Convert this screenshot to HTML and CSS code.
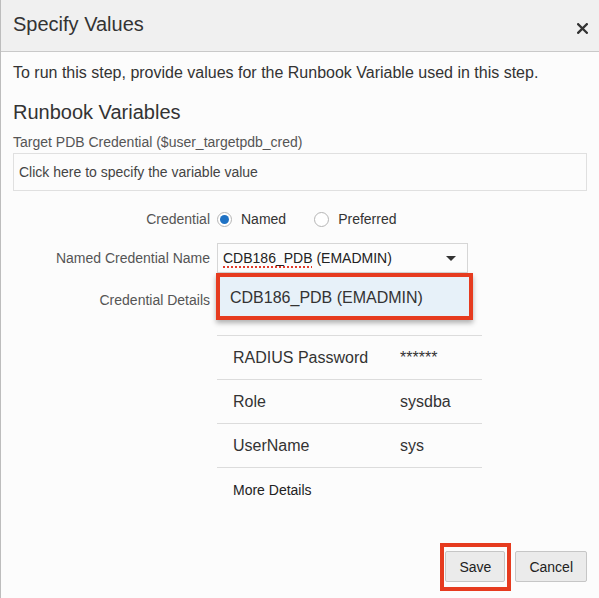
FILE: index.html
```html
<!DOCTYPE html>
<html>
<head>
<meta charset="utf-8">
<link rel="stylesheet" href="styles.css">
</head>
<body>
<div class="dialog">
  <div class="header">
    <div class="title">Specify Values</div>
    <svg class="close" width="11" height="11" viewBox="0 0 11 11"><path d="M1.2 1.2 L9.8 9.8 M9.8 1.2 L1.2 9.8" stroke="#333" stroke-width="2.3" stroke-linecap="square"/></svg>
  </div>
  <div class="body">
    <p class="intro">To run this step, provide values for the Runbook Variable used in this step.</p>
    <h2 class="section">Runbook Variables</h2>
    <div class="var-label">Target PDB Credential ($user_targetpdb_cred)</div>
    <div class="var-input">Click here to specify the variable value</div>
    <div class="form">
      <div class="flabel r1">Credential</div>
      <div class="radios">
        <span class="radio checked"><span class="dot"></span></span><span class="rtext">Named</span>
        <span class="radio second"></span><span class="rtext">Preferred</span>
      </div>
      <div class="flabel r2">Named Credential Name</div>
      <div class="select">
        <span class="sel-text"><span class="spell">CDB186_PDB</span> (EMADMIN)</span>
        <span class="arrow"></span>
        <div class="popup">CDB186_PDB (EMADMIN)</div>
      </div>
      <div class="flabel r3">Credential Details</div>
      <div class="details">
        <div class="row"><span class="k">RADIUS Password</span><span class="v">******</span></div>
        <div class="row"><span class="k">Role</span><span class="v">sysdba</span></div>
        <div class="row last"><span class="k">UserName</span><span class="v">sys</span></div>
        <div class="more">More Details</div>
      </div>
    </div>
  </div>
  <div class="footer">
    <button class="btn save">Save</button>
    <button class="btn">Cancel</button>
  </div>
</div>
</body>
</html>
```
FILE: styles.css
```css
html, body {
  margin: 0;
  padding: 0;
  background: #fcfcfc;
}
body {
  font-family: "Liberation Sans", Arial, sans-serif;
  color: #333;
}
.dialog {
  width: 598px;
  height: 598px;
  border-left: 1px solid #bdbdbd;
  display: flex;
  flex-direction: column;
  background: #fcfcfc;
}
.header {
  height: 51px;
  box-sizing: content-box;
  background: #f0f0f0;
  border-bottom: 1px solid #c9c9c9;
  display: flex;
  align-items: flex-start;
  justify-content: space-between;
  padding: 0 11px 0 12px;
}
.title {
  font-size: 20px;
  line-height: 23px;
  margin-top: 13px;
  color: #333;
}
.close {
  margin-top: 23px;
}
.body {
  padding: 0 12px;
  position: relative;
}
.intro {
  margin: 11px 0 0;
  font-size: 16px;
  line-height: 20px;
}
.section {
  margin: 17px 0 0;
  font-size: 20px;
  font-weight: normal;
  line-height: 24px;
}
.var-label {
  margin-top: 9px;
  font-size: 14px;
  line-height: 18px;
  color: #555;
}
.var-input {
  margin-top: 2px;
  height: 38px;
  box-sizing: border-box;
  border: 1px solid #e0e0e0;
  padding: 0 5px;
  font-size: 14px;
  line-height: 36px;
  color: #444;
  background: #fcfcfc;
}
.form {
  margin-top: 13px;
  display: grid;
  grid-template-columns: 197px 251px;
  column-gap: 7px;
  row-gap: 9px;
  font-size: 14px;
}
.flabel {
  text-align: right;
  color: #555;
  line-height: 30px;
}
.flabel.r3 {
  line-height: 36px;
}
.radios {
  display: flex;
  align-items: center;
  height: 30px;
}
.radio {
  width: 15px;
  height: 15px;
  box-sizing: border-box;
  border: 1px solid #b5b5b5;
  border-radius: 50%;
  background: #fff;
  display: flex;
  align-items: center;
  justify-content: center;
}
.radio .dot {
  width: 9px;
  height: 9px;
  border-radius: 50%;
  background: #1f72c4;
}
.radio.second {
  margin-left: 28px;
}
.rtext {
  margin-left: 9px;
  font-size: 14px;
  color: #333;
}
.select {
  position: relative;
  height: 30px;
  box-sizing: border-box;
  border: 1px solid #d6d6d6;
  background: #fcfcfc;
  display: flex;
  align-items: center;
  justify-content: space-between;
  padding: 0 11px 0 5px;
  color: #222;
}
.sel-text {
  line-height: 28px;
}
.spell {
  text-decoration: underline dotted #e23a2a;
  text-decoration-thickness: 1.5px;
  text-underline-offset: 3px;
}
.arrow {
  width: 0;
  height: 0;
  border-left: 5px solid transparent;
  border-right: 5px solid transparent;
  border-top: 5px solid #333;
}
.popup {
  position: absolute;
  top: 29px;
  left: -2px;
  width: 257px;
  height: 47px;
  box-sizing: border-box;
  border: 4px solid #e63b1f;
  background: #e7f1f9;
  box-shadow: 0 3px 5px rgba(0, 0, 0, 0.3);
  font-size: 16px;
  line-height: 37px;
  padding: 2px 0 0 10px;
  color: #333;
  z-index: 2;
}
.details {
  padding-top: 53px;
  width: 265px;
}
.row {
  height: 44px;
  box-sizing: border-box;
  border-top: 1px solid #dcdcdc;
  display: flex;
  align-items: center;
  font-size: 16px;
  color: #333;
}
.row.last {
  height: 45px;
  border-bottom: 1px solid #dcdcdc;
}
.row .k {
  width: 167px;
  box-sizing: border-box;
  padding-left: 16px;
}
.row .v {
  padding-left: 16px;
}
.more {
  height: 44px;
  line-height: 44px;
  padding-left: 16px;
  font-size: 14px;
  color: #222;
}
.footer {
  margin-top: auto;
  display: flex;
  justify-content: flex-end;
  gap: 10px;
  padding: 0 12px 16px 0;
}
.btn {
  height: 31px;
  padding: 0 13px;
  font-family: "Liberation Sans", Arial, sans-serif;
  font-size: 14px;
  color: #222;
  background: #ebebeb;
  border: 1px solid #c6c6c6;
  border-radius: 2px;
}
.save {
  position: relative;
}
.save::after {
  content: "";
  position: absolute;
  top: -9px;
  left: -6px;
  right: -7px;
  bottom: -10px;
  border: 4px solid #e63b1f;
}
```
